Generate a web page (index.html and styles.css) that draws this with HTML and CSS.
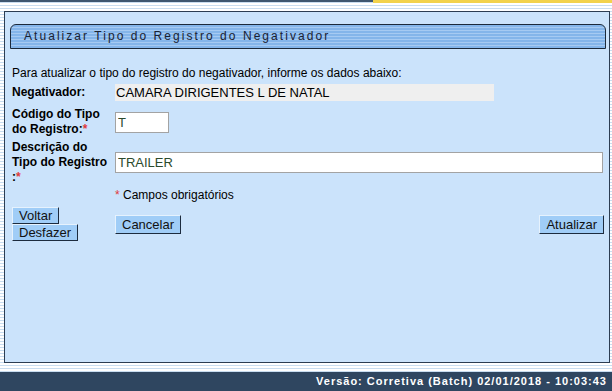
FILE: index.html
```html
<!DOCTYPE html>
<html lang="pt-BR">
<head>
<meta charset="UTF-8">
<title>Atualizar Tipo do Registro do Negativador</title>
<link rel="stylesheet" href="styles.css">
</head>
<body>

<div class="topbar"><span class="topbar-gold"></span></div>

<div class="panel">
    <div class="panel-title">Atualizar Tipo do Registro do Negativador</div>

    <form class="form">
        <p class="intro">Para atualizar o tipo do registro do negativador, informe os dados abaixo:</p>

        <div class="row row-neg">
            <label>Negativador:</label>
            <div class="readonly">CAMARA DIRIGENTES L DE NATAL</div>
        </div>

        <div class="row row-codigo">
            <label>Código do Tipo<br>do Registro:<span class="req">*</span></label>
            <input type="text" class="field field-short" value="T">
        </div>

        <div class="row row-desc">
            <label>Descrição do<br>Tipo do Registro<br>:<span class="req">*</span></label>
            <input type="text" class="field field-long" value="TRAILER">
        </div>

        <p class="note"><span class="req">*</span> Campos obrigatórios</p>

        <div class="actions">
            <div class="actions-left">
                <button type="button" class="btn">Voltar</button>
                <button type="button" class="btn">Desfazer</button>
            </div>
            <button type="button" class="btn">Cancelar</button>
            <button type="button" class="btn btn-right">Atualizar</button>
        </div>
    </form>
</div>

<div class="footer">Versão: Corretiva (Batch) 02/01/2018 - 10:03:43</div>

</body>
</html>
```

FILE: styles.css
```css
body {
    margin: 0;
    height: 391px;
    overflow: hidden;
    font-family: "Liberation Sans", Arial, sans-serif;
    font-size: 12px;
    color: #000;
    background: repeating-linear-gradient(to bottom, #ffffff 0 2px, #c9ddf0 2px 3px);
}

.topbar {
    display: flex;
    justify-content: flex-end;
    height: 2px;
    background: #3d5670;
}
.topbar-gold {
    width: 239px;
    height: 3px;
    background: #f2d24c;
}

.panel {
    margin: 9px 2px 0 4px;
    height: 338px;
    padding: 12px 3px 0 5px;
    background: #cbe3fb;
    border: 1px solid #2c3d52;
}

.panel-title {
    height: 23px;
    line-height: 23px;
    padding-left: 13px;
    font-size: 12px;
    letter-spacing: 2.05px;
    color: #1a2232;
    border: 1px solid #1c2a3b;
    border-radius: 6px 6px 0 0;
    background: repeating-linear-gradient(to bottom, #84b5ea 0 2px, #a6caf2 2px 3px);
}

.form {
    padding-left: 2px;
}

.intro {
    margin: 17px 0 0;
    line-height: 15px;
}

.row {
    display: grid;
    grid-template-columns: 103px 1fr;
    align-items: center;
}
.row label {
    font-weight: bold;
    line-height: 15px;
}
.row-neg {
    margin-top: 3px;
}
.row-codigo {
    margin-top: 6px;
}
.row-desc {
    margin-top: 3px;
}

.readonly {
    width: 378px;
    height: 17px;
    line-height: 17px;
    padding-left: 1px;
    font-size: 13px;
    background: #efefef;
}

.field {
    box-sizing: border-box;
    height: 21px;
    padding: 0 2px;
    font-family: "Liberation Sans", Arial, sans-serif;
    font-size: 13px;
    color: #2c4a2c;
    background: #fff;
    border: 1px solid #a3a3a3;
}
.field-short {
    width: 54px;
}
.field-long {
    width: 488px;
}

.req {
    color: #e03a3a;
}

.note {
    margin: 3px 0 0 103px;
    line-height: 15px;
}

.actions {
    display: flex;
    align-items: center;
    margin-top: 4px;
    padding-right: 2px;
}
.actions-left {
    width: 103px;
    display: flex;
    flex-direction: column;
    align-items: flex-start;
}

.btn {
    height: 17px;
    padding: 0 6px;
    font-family: "Liberation Sans", Arial, sans-serif;
    font-size: 13px;
    line-height: 15px;
    color: #111;
    background: #a0cdf7;
    border: 1px solid;
    border-color: #e6f2fd #1c2b3e #1c2b3e #e6f2fd;
    cursor: pointer;
}
.actions > .btn {
    height: 19px;
}
.btn-right {
    margin-left: auto;
}

.footer {
    margin-top: 9px;
    height: 19px;
    line-height: 19px;
    padding-right: 5px;
    text-align: right;
    font-size: 11px;
    font-weight: bold;
    letter-spacing: 1px;
    color: #fff;
    background: #2f4660;
}
```
